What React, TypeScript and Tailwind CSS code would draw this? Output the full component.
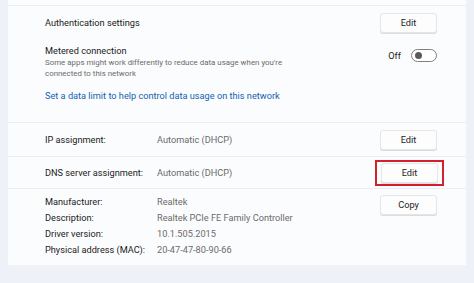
import React from "react";

function Btn({ label, outlined = false }: { label: string; outlined?: boolean }) {
  const btn = (
    <div className="flex h-[20px] w-[57px] items-center justify-center rounded-[3px] border border-[#e6e6e6] bg-[#fdfdfd] text-[#1b1b1b] shadow-[0_1px_0_#dcdcdc]">
      {label}
    </div>
  );
  if (!outlined) return btn;
  return (
    <div className="-mx-[7px] flex h-[26px] w-[69px] items-center justify-center border-2 border-[#d3202c]">
      {btn}
    </div>
  );
}

function Row({
  label, value, action, outlined, h,
}: {
  label: string; value: string; action: string; outlined?: boolean; h: string;
}) {
  return (
    <div className={`flex ${h} items-center border-t border-[#ebedf0] pl-[37px] pr-[29px]`}>
      <div className="w-[112px] text-[#1b1b1b]">{label}</div>
      <div className="flex-1 text-[#6b6b6b]">{value}</div>
      <Btn label={action} outlined={outlined} />
    </div>
  );
}

export default function App() {
  return (
    <div
      className="h-[283px] w-[474px] overflow-hidden bg-[#eef2f8] px-[8px] text-[9.2px]"
      style={{ fontFamily: 'Roboto, "Open Sans", sans-serif' }}
    >
      {/* Card */}
      <div className="h-[265px] bg-[#fbfcfd] pt-[5px]">
        <div className="border-t border-[#ebedf0]">
          {/* Authentication */}
          <div className="flex h-[33px] items-center pl-[37px] pr-[29px] pt-[1px]">
            <div className="flex-1 text-[#1b1b1b]">Authentication settings</div>
            <Btn label="Edit" />
          </div>

          {/* Metered */}
          <div className="flex h-[46px] items-start pl-[37px] pr-[29px] pt-[6px]">
            <div className="flex-1">
              <div className="leading-[12px] text-[#1b1b1b]">Metered connection</div>
              <div className="w-[260px] text-[7.9px] leading-[11px] text-[#6b6b6b]">
                Some apps might work differently to reduce data usage when you're connected to this network
              </div>
            </div>
            <div className="flex items-center gap-[10px] pt-[4px]">
              <span className="text-[#1b1b1b]">Off</span>
              <div className="flex h-[13px] w-[26px] items-center rounded-full border border-[#808080] bg-white pl-[3px]">
                <div className="h-[7px] w-[7px] rounded-full bg-[#5a5a5a]" />
              </div>
            </div>
          </div>

          {/* Link */}
          <div className="h-[37px] pl-[37px] pt-[5px] leading-[12px] text-[#1560b5]">
            Set a data limit to help control data usage on this network
          </div>
        </div>

        <Row label="IP assignment:" value="Automatic (DHCP)" action="Edit" h="h-[34px]" />
        <Row label="DNS server assignment:" value="Automatic (DHCP)" action="Edit" outlined h="h-[32px]" />

        {/* Adapter details */}
        <div className="flex border-t border-[#ebedf0] pl-[37px] pr-[29px] pt-[5px]">
          <div className="w-[112px] leading-[16px] text-[#1b1b1b]">
            <div>Manufacturer:</div>
            <div>Description:</div>
            <div>Driver version:</div>
            <div>Physical address (MAC):</div>
          </div>
          <div className="flex-1 leading-[16px] text-[#6b6b6b]">
            <div>Realtek</div>
            <div>Realtek PCIe FE Family Controller</div>
            <div>10.1.505.2015</div>
            <div>20-47-47-80-90-66</div>
          </div>
          <div className="pt-[1px]">
            <Btn label="Copy" />
          </div>
        </div>
      </div>
    </div>
  );
}
